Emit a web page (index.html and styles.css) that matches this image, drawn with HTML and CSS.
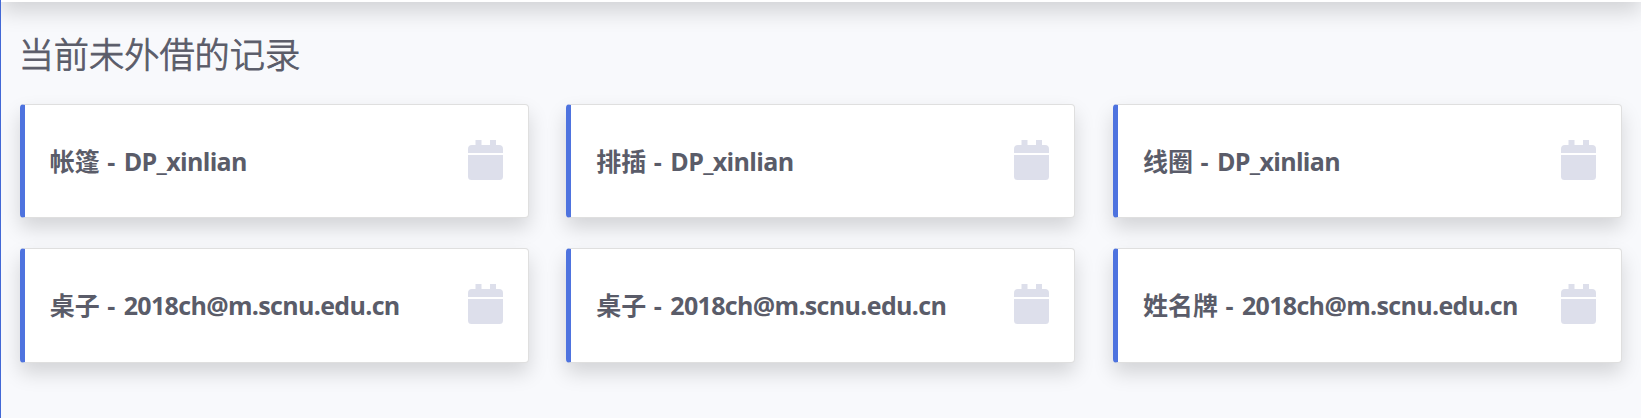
FILE: index.html
```html
<!DOCTYPE html>
<html lang="zh-CN">
<head>
<meta charset="utf-8">
<title>当前未外借的记录</title>
<link rel="stylesheet" href="styles.css">
</head>
<body>
<svg class="sprite" aria-hidden="true">
  <symbol id="calendar" viewBox="0 0 35 40"><path d="M0 13V9q0-4 4-4h3.500V0h6v5h8.500V0h6v5H31q4 0 4 4v4zM0 15h35v21.500q0 3.500-3.500 3.500h-28Q0 40 0 36.500z"/></symbol>
</svg>
<div class="page">
  <nav class="topbar"></nav>
  <main class="content">
    <h1 class="heading">当前未外借的记录</h1>
    <div class="cards">
      <div class="card"><div class="name">帐篷<span class="dash"> - </span><span class="owner">DP_xinlian</span></div><svg class="icon"><use href="#calendar"/></svg></div>
      <div class="card"><div class="name">排插<span class="dash"> - </span><span class="owner">DP_xinlian</span></div><svg class="icon"><use href="#calendar"/></svg></div>
      <div class="card"><div class="name">线圈<span class="dash"> - </span><span class="owner">DP_xinlian</span></div><svg class="icon"><use href="#calendar"/></svg></div>
      <div class="card"><div class="name">桌子<span class="dash"> - </span><span class="owner">2018ch@m.scnu.edu.cn</span></div><svg class="icon"><use href="#calendar"/></svg></div>
      <div class="card"><div class="name">桌子<span class="dash"> - </span><span class="owner">2018ch@m.scnu.edu.cn</span></div><svg class="icon"><use href="#calendar"/></svg></div>
      <div class="card"><div class="name">姓名牌<span class="dash"> - </span><span class="owner">2018ch@m.scnu.edu.cn</span></div><svg class="icon"><use href="#calendar"/></svg></div>
    </div>
  </main>
</div>
</body>
</html>
```
FILE: styles.css
```css
* { box-sizing: border-box; }
body {
  margin: 0;
  color: #5a5c69;
  font-family: "Open Sans", "Noto Sans CJK SC", sans-serif;
}
.sprite { display: none; }
.page {
  display: flex;
  flex-direction: column;
  height: 418px;
  overflow: hidden;
  border-left: 1px solid #4268d6;
  background: #f8f9fc;
}
/* Lower edge of the navigation bar, scrolled mostly out of view */
.topbar {
  flex: none;
  height: 88px;
  margin-top: -86px;
  background: #fff;
  box-shadow: 0 10px 20px rgba(0, 0, 0, .15);
}
.content { padding: 30px 19px 0 18.67px; }
.heading {
  margin: 0 0 30px -1px;
  font-family: "Noto Sans CJK SC", sans-serif;
  font-size: 35.2px;
  font-weight: 300;
  line-height: 42px;
  -webkit-text-stroke: .9px #5a5c69;
}
.cards {
  display: grid;
  grid-template-columns: repeat(3, 1fr);
  grid-template-rows: 114px 115px;
  gap: 30px 37.5px;
}
.card {
  display: flex;
  align-items: flex-start;
  justify-content: space-between;
  padding: 35px 25px 0;
  border: 1px solid #dfdfdf;
  border-left: 5px solid #4e73df;
  border-radius: 4px;
  background: #fff;
  box-shadow: 0 10px 20px rgba(0, 0, 0, .15);
}
.name {
  font-size: 25px;
  font-weight: 700;
  line-height: 42px;
  white-space: pre;
}
.dash { letter-spacing: 1px; }
.owner { letter-spacing: -.67px; }
.icon {
  width: 35px;
  height: 40px;
  fill: #dddfeb;
}
```
